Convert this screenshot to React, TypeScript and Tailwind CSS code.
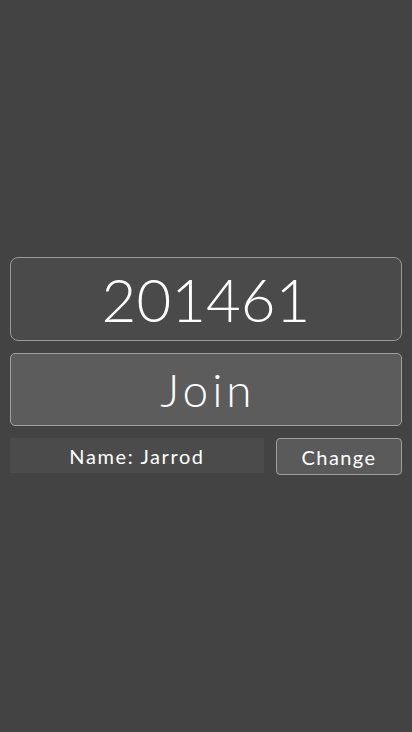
export default function App() {
  return (
    <div
      className="h-[732px] w-full bg-[#434343] flex flex-col justify-center px-[10px] text-white"
      style={{ fontFamily: 'Lato, "Open Sans", sans-serif' }}
    >
      <div className="flex flex-col gap-[12px]">
        {/* ROOM CODE */}
        <div className="h-[84px] rounded-[8px] border border-[#9a9a9a] bg-[#4a4a4a] flex items-center justify-center">
          <span className="text-[60px] font-light leading-none tracking-[0px]">201461</span>
        </div>

        {/* JOIN */}
        <button className="h-[73px] rounded-[5px] border border-[#a0a0a0] bg-[#5c5c5c] flex items-center justify-center">
          <span className="text-[46px] font-light leading-none tracking-[4px] pl-[4px]">Join</span>
        </button>

        {/* NAME ROW */}
        <div className="flex gap-[12px] items-start">
          <div className="w-[254px] h-[35px] bg-[#4b4b4b] flex items-center justify-center">
            <span className="text-[20px] leading-none tracking-[1.6px]">Name: Jarrod</span>
          </div>
          <button className="flex-1 h-[37px] rounded-[4px] border border-[#a0a0a0] bg-[#5a5a5a] flex items-center justify-center">
            <span className="text-[20px] leading-none tracking-[1.4px]">Change</span>
          </button>
        </div>
      </div>
    </div>
  )
}
